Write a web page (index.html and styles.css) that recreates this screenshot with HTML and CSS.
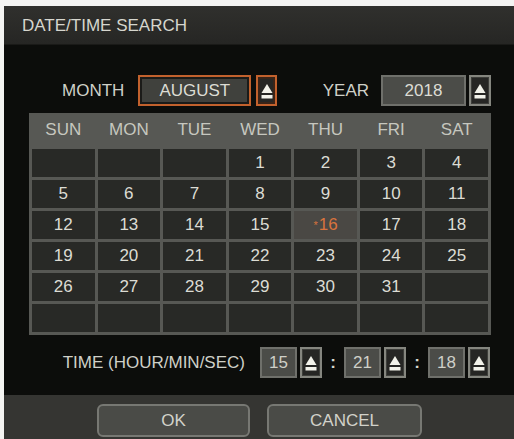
FILE: index.html
```html
<!DOCTYPE html>
<html lang="en">
<head>
  <meta charset="UTF-8" />
  <title>Date/Time Search</title>
  <link rel="stylesheet" href="styles.css">
</head>
<body>

<div class="dialog">
  <div class="dialog-title">DATE/TIME SEARCH</div>

  <div class="dialog-body">
    <!-- month / year pickers -->
    <div class="field-row">
      <span class="label month-label">MONTH</span>
      <span class="value month-value">AUGUST</span>
      <span class="spin spin-active">
        <svg viewBox="0 0 16 27" width="16" height="27"><polygon points="8,7 13.5,16 2.5,16" fill="#f2f2ea"/><rect x="2.5" y="18" width="11" height="3.5" fill="#f2f2ea"/></svg>
      </span>
      <div class="year-group">
        <span class="label year-label">YEAR</span>
        <span class="value year-value">2018</span>
        <span class="spin">
          <svg viewBox="0 0 16 27" width="16" height="27"><polygon points="8,7 13.5,16 2.5,16" fill="#f2f2ea"/><rect x="2.5" y="18" width="11" height="3.5" fill="#f2f2ea"/></svg>
        </span>
      </div>
    </div>

    <div class="calendar">
      <div class="day-name">SUN</div>
      <div class="day-name">MON</div>
      <div class="day-name">TUE</div>
      <div class="day-name">WED</div>
      <div class="day-name">THU</div>
      <div class="day-name">FRI</div>
      <div class="day-name">SAT</div>

      <div class="day"></div><div class="day"></div><div class="day"></div>
      <div class="day">1</div><div class="day">2</div><div class="day">3</div><div class="day">4</div>
      <div class="day">5</div><div class="day">6</div><div class="day">7</div><div class="day">8</div>
      <div class="day">9</div><div class="day">10</div><div class="day">11</div>
      <div class="day">12</div><div class="day">13</div><div class="day">14</div><div class="day">15</div>
      <div class="day today"><sup>*</sup>16</div><div class="day">17</div><div class="day">18</div>
      <div class="day">19</div><div class="day">20</div><div class="day">21</div><div class="day">22</div>
      <div class="day">23</div><div class="day">24</div><div class="day">25</div>
      <div class="day">26</div><div class="day">27</div><div class="day">28</div><div class="day">29</div>
      <div class="day">30</div><div class="day">31</div><div class="day"></div>
      <div class="day"></div><div class="day"></div><div class="day"></div><div class="day"></div>
      <div class="day"></div><div class="day"></div><div class="day"></div>
    </div>

    <!-- time pickers -->
    <div class="time-row">
      <span class="label time-label">TIME (HOUR/MIN/SEC)</span>
      <span class="value time-value">15</span>
      <span class="spin">
        <svg viewBox="0 0 16 27" width="16" height="27"><polygon points="8,7 13.5,16 2.5,16" fill="#f2f2ea"/><rect x="2.5" y="18" width="11" height="3.5" fill="#f2f2ea"/></svg>
      </span>
      <span class="colon">:</span>
      <span class="value time-value">21</span>
      <span class="spin">
        <svg viewBox="0 0 16 27" width="16" height="27"><polygon points="8,7 13.5,16 2.5,16" fill="#f2f2ea"/><rect x="2.5" y="18" width="11" height="3.5" fill="#f2f2ea"/></svg>
      </span>
      <span class="colon">:</span>
      <span class="value time-value">18</span>
      <span class="spin">
        <svg viewBox="0 0 16 27" width="16" height="27"><polygon points="8,7 13.5,16 2.5,16" fill="#f2f2ea"/><rect x="2.5" y="18" width="11" height="3.5" fill="#f2f2ea"/></svg>
      </span>
    </div>
  </div>

  <div class="dialog-buttons">
    <button class="btn btn-ok">OK</button>
    <button class="btn btn-cancel">CANCEL</button>
  </div>
</div>

</body>
</html>
```

FILE: styles.css
```css
html, body {
  margin: 0;
  padding: 0;
  background: #f4f4f2;
  overflow: hidden;
  font-family: "Liberation Sans", Arial, sans-serif;
  font-size: 17px;
}
.dialog {
  margin: 6px 0 0 4px;
  width: 510px;
  height: 433px;
  display: flex;
  flex-direction: column;
  background: #0c0d0b;
}
.dialog-title {
  height: 39px;
  line-height: 39px;
  padding-left: 18px;
  color: #d6d6ce;
  background: linear-gradient(to bottom, #30302d, #262624);
  border-bottom: 1px solid #1a1a18;
  box-sizing: border-box;
}
.dialog-body {
  flex: 1;
  padding: 30px 23px 0 25px;
}
.label {
  color: #cfd0c8;
}

/* month / year */
.field-row {
  display: flex;
  align-items: center;
  height: 31px;
}
.month-label {
  margin-left: 33px;
}
.value {
  display: flex;
  align-items: center;
  justify-content: center;
  box-sizing: border-box;
  height: 31px;
  color: #dcdcd4;
  background: #4b4c48;
  border: 2px solid #6f706b;
}
.month-value {
  width: 113px;
  margin-left: 14px;
  background: #40413d;
  border-color: #c2612d;
  box-shadow: inset 0 0 0 2px #1b1b19;
}
.spin {
  display: flex;
  align-items: center;
  justify-content: center;
  box-sizing: border-box;
  width: 22px;
  height: 31px;
  margin-left: 3px;
  background: #262624;
  border: 2px solid #85867f;
  box-shadow: inset 0 0 0 1px #3d3e3a;
}
.spin-active {
  width: 21px;
  margin-left: 5px;
  border-color: #c2612d;
  box-shadow: inset 0 0 0 2px #3a2418;
}
.year-group {
  display: flex;
  align-items: center;
  margin-left: auto;
}
.year-label {
  margin-right: 12px;
}
.year-value {
  width: 85px;
}

/* calendar grid */
.calendar {
  margin-top: 7px;
  display: grid;
  grid-template-columns: repeat(7, 1fr);
  grid-template-rows: 33px repeat(6, 28px);
  gap: 3px;
  padding: 0 3px 3px;
  background: #575854;
}
.day-name {
  display: flex;
  align-items: center;
  justify-content: center;
  color: #c6c7bf;
}
.day {
  display: flex;
  align-items: center;
  justify-content: center;
  background: #282926;
  color: #dcdcd4;
}
.day.today {
  background: #4a4844;
  color: #d8733d;
}
.day.today sup {
  font-size: 11px;
  margin-right: 1px;
}

/* time */
.time-row {
  display: flex;
  align-items: center;
  justify-content: flex-end;
  height: 31px;
  margin-top: 12px;
  padding-right: 1px;
}
.time-label {
  margin-right: 15px;
}
.time-value {
  width: 37px;
  color: #cfd0c8;
}
.colon {
  width: 22px;
  text-align: center;
  color: #d6d6ce;
  font-weight: bold;
}

/* bottom buttons */
.dialog-buttons {
  height: 44px;
  display: flex;
  padding-left: 93px;
  background: #353532;
}
.btn {
  margin-top: 9px;
  height: 33px;
  box-sizing: border-box;
  border: 2px solid #777873;
  border-radius: 6px;
  background: #4a4b47;
  color: #d2d2ca;
  font-family: inherit;
  font-size: 17px;
  padding: 0;
}
.btn-ok {
  width: 153px;
}
.btn-cancel {
  width: 155px;
  margin-left: 17px;
}
```
